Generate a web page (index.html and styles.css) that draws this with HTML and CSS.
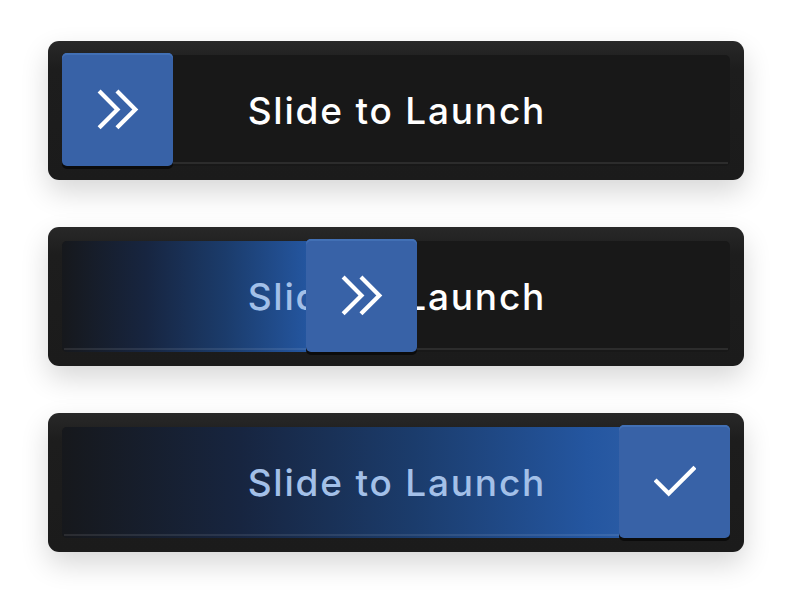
FILE: index.html
```html
<!DOCTYPE html>
<html lang="en">
<head>
    <meta charset="UTF-8">
    <meta name="viewport" content="width=device-width, initial-scale=1.0">
    <title>Slide to Launch</title>
    <link rel="stylesheet" href="styles.css">
</head>
<body>
    <div class="stack">
        <div class="slider">
            <div class="track">
                <span class="label">Slide to Launch</span>
                <div class="knob" style="left: 0px;">
                    <svg class="icon" viewBox="0 0 40 40">
                        <path d="M2 2 L19.5 19.5 L2 37 M19 2 L36.5 19.5 L19 37"/>
                    </svg>
                </div>
            </div>
        </div>

        <div class="slider">
            <div class="track">
                <span class="label">Slide to Launch</span>
                <div class="fill" style="width: 300px;">
                    <span class="label label-lit">Slide to Launch</span>
                </div>
                <div class="knob" style="left: 244px;">
                    <svg class="icon" viewBox="0 0 40 40">
                        <path d="M2 2 L19.5 19.5 L2 37 M19 2 L36.5 19.5 L19 37"/>
                    </svg>
                </div>
            </div>
        </div>

        <div class="slider">
            <div class="track">
                <span class="label">Slide to Launch</span>
                <div class="fill" style="width: 640px;">
                    <span class="label label-lit">Slide to Launch</span>
                </div>
                <div class="knob" style="left: 557px;">
                    <svg class="icon" viewBox="0 0 40 40">
                        <path d="M1 18 L14 31 L39 6"/>
                    </svg>
                </div>
            </div>
        </div>
    </div>
</body>
</html>
```

FILE: styles.css
```css
body {
    margin: 0;
    padding: 0;
    background: #fff;
    font-family: Inter, "Noto Sans", sans-serif;
}
.stack {
    display: flex;
    flex-direction: column;
    gap: 47px;
    padding: 41px 48px;
    width: 696px;
}
.slider {
    height: 139px;
    padding: 14px;
    box-sizing: border-box;
    border-radius: 11px;
    background: linear-gradient(#282828, #1d1d1d 20%, #1b1b1b);
    box-shadow: 0 12px 28px rgba(0, 0, 0, 0.16);
}
.track {
    position: relative;
    height: 111px;
    border-radius: 5px;
    background: #181818;
    display: flex;
    align-items: center;
    justify-content: center;
}
.track::after {
    content: "";
    position: absolute;
    left: 2px;
    right: 2px;
    bottom: 2px;
    height: 2px;
    background: rgba(255, 255, 255, 0.09);
    z-index: 2;
}
.label {
    color: #fff;
    font-size: 37px;
    font-weight: 500;
    letter-spacing: 1.8px;
    padding-left: 1.8px;
}
.fill {
    position: absolute;
    left: 0;
    top: 0;
    bottom: 0;
    overflow: hidden;
    border-radius: 5px 0 0 5px;
    background: linear-gradient(90deg, #16181c 0%, #172540 28%, #1b3c6c 55%, #2456a0 82%, #3464ad 100%);
}
.fill .label-lit {
    position: absolute;
    left: 0;
    top: 0;
    width: 668px;
    height: 111px;
    box-sizing: border-box;
    display: flex;
    align-items: center;
    justify-content: center;
    color: #a3c0e8;
}
.knob {
    position: absolute;
    top: -2px;
    width: 111px;
    height: 113px;
    border-radius: 5px;
    background: #3862a7;
    box-shadow: inset 0 2px 0 #4270b5, 0 3px 0 #0b0b0b;
    display: flex;
    align-items: center;
    justify-content: center;
    z-index: 3;
}
.icon {
    width: 42px;
    height: 42px;
    fill: none;
    stroke: #fff;
    stroke-width: 4;
}
```
